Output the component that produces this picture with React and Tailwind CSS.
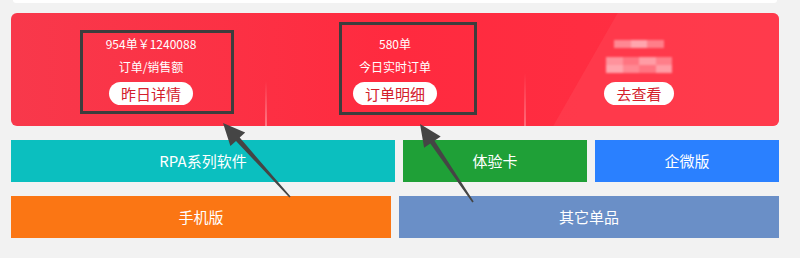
import React from "react";

const font = { fontFamily: '"Noto Sans CJK SC", "Noto Sans", sans-serif' };

function Stat({ line1, line2, btn }) {
  return (
    <div className="flex flex-1 flex-col items-center">
      <div className="mt-[22px] flex h-[18px] items-center text-[12px] leading-none text-white">{line1}</div>
      <div className="mt-[5px] flex h-[18px] items-center text-[12px] leading-none text-white">{line2}</div>
      <div className="mt-[6px] flex h-[23px] items-center rounded-full bg-white px-3 text-[15px] leading-none text-[#d3202c]">{btn}</div>
    </div>
  );
}

export default function App() {
  return (
    <div className="relative h-[258px] w-[800px] overflow-hidden bg-[#f2f2f2]" style={font}>
      <div className="ml-[11px] w-[768px]">
        <div className="ml-[2px] h-[3px] w-[764px] rounded-b-[3px] bg-white" />
        <div className="relative mt-[10px] h-[113px] overflow-hidden rounded-[6px] bg-gradient-to-r from-[#f8384b] via-[#ff2a3f] to-[#ff3043]">
          <div className="absolute inset-0 bg-[#ff4a5a]/40 [clip-path:polygon(79%_0,100%_0,100%_100%,70.6%_100%)]" />
          <div className="absolute left-[254px] top-[68px] h-[45px] w-[2px] bg-gradient-to-b from-transparent to-white/35" />
          <div className="absolute left-[513px] top-[60px] h-[53px] w-[2px] bg-gradient-to-b from-transparent to-white/30" />
          <div className="relative flex h-full px-[18px]">
            <Stat line1="954单￥1240088" line2="订单/销售额" btn="昨日详情" />
            <Stat line1="580单" line2="今日实时订单" btn="订单明细" />
            <div className="flex flex-1 flex-col items-center">
              <div className="mt-[27px] flex h-[8px] w-[50px] blur-[1px]">
                <div className="flex-1 bg-white/40" />
                <div className="flex-1 bg-white/55" />
                <div className="flex-1 bg-white/35" />
              </div>
              <div className="mt-[9px] grid h-[16px] w-[66px] grid-cols-4 grid-rows-2 blur-[1px]">
                <div className="bg-white/45" />
                <div className="bg-white/30" />
                <div className="bg-white/50" />
                <div className="bg-white/35" />
                <div className="bg-white/55" />
                <div className="bg-white/40" />
                <div className="bg-white/30" />
                <div className="bg-white/50" />
              </div>
              <div className="mt-[9px] flex h-[23px] items-center rounded-full bg-white px-3 text-[15px] leading-none text-[#d3202c]">去查看</div>
            </div>
          </div>
        </div>
        <div className="mt-[14px] flex h-[42px] gap-[8px] text-[15px] text-white">
          <div className="flex w-[384px] items-center justify-center bg-[#0bbfbf]">RPA系列软件</div>
          <div className="flex w-[184px] items-center justify-center bg-[#1fa037]">体验卡</div>
          <div className="flex w-[184px] items-center justify-center bg-[#2a80ff]">企微版</div>
        </div>
        <div className="mt-[14px] flex h-[42px] gap-[8px] text-[15px] text-white">
          <div className="flex w-[380px] items-center justify-center bg-[#fb7614]">手机版</div>
          <div className="flex w-[380px] items-center justify-center bg-[#6a8fc7]">其它单品</div>
        </div>
      </div>

      <div className="absolute left-[80px] top-[30px] h-[84px] w-[154px] border-[3px] border-[#3d3d3d]" />
      <div className="absolute left-[339px] top-[22px] h-[93px] w-[138px] border-[3px] border-[#3d3d3d]" />

      <svg className="pointer-events-none absolute left-0 top-0" width="800" height="258">
        <polygon
          fill="#454545"
          points="223,123 245.2,132.6 239.7,137.6 290.6,196.5 289.4,197.5 236,141 230.4,146"
        />
        <polygon
          fill="#454545"
          points="420,124 440.7,136.6 434.5,140.8 473.7,201.6 472.3,202.4 430.3,143.6 424.1,147.8"
        />
      </svg>
    </div>
  );
}
